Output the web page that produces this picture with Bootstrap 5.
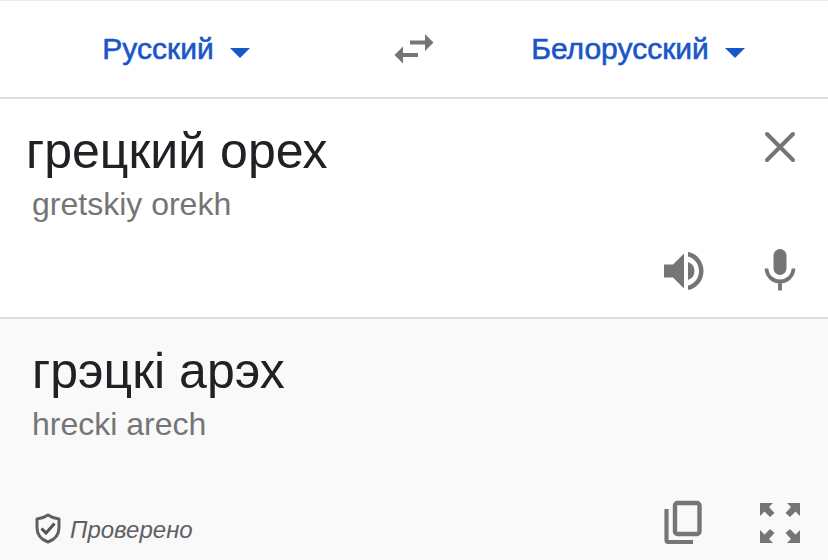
<!DOCTYPE html>
<html lang="ru">
<head>
<meta charset="utf-8">
<meta name="viewport" content="width=device-width, initial-scale=1">
<title>Переводчик</title>
<link rel="stylesheet" href="https://cdn.jsdelivr.net/npm/bootstrap@5.3.0/dist/css/bootstrap.min.css">
<style>
  body { font-family: "Liberation Sans", Arial, sans-serif; color: #202124; background: #fff; }
  .lang-bar { border-top: 1px solid #ececec; border-bottom: 2px solid #dedede; padding: 24px 0; }
  .lang-side { flex: 1 1 0; padding-right: 14px; }
  .lang-btn { color: #1a56c8; font-size: 30px; line-height: 48px; -webkit-text-stroke: .02em currentColor; }
  .lang-btn:hover { color: #1a56c8; }
  .swap-col { width: 96px; }
  .plain-btn { color: #757575; line-height: 1; }
  .plain-btn svg, .lang-btn svg { display: block; fill: currentColor; }
  .source-pane { border-bottom: 2px solid #dedede; padding: 20px 24px 22px 26px; }
  .result-pane { background: #f9f9f9; padding: 20px 24px 13px 32px; }
  .phrase { font-size: 50px; line-height: 64px; color: #202124; }
  .source-input { resize: none; overflow: hidden; height: 64px; outline: 0; }
  .translit { font-size: 32px; line-height: 42px; color: #757575; }
  .source-pane .translit { padding-left: 6px; }
  .source-pane .action-row { margin-top: 22px; }
  .action-row { gap: 48px; }
  .verified { font-size: 24px; line-height: 32px; color: #5f6063; gap: 6px; padding-top: 14px; }
</style>
<script defer src="https://cdn.jsdelivr.net/npm/bootstrap@5.3.0/dist/js/bootstrap.bundle.min.js"></script>
</head>
<body>
<div class="d-flex flex-column min-vh-100">
  <header class="lang-bar d-flex align-items-center">
    <div class="lang-side d-flex justify-content-center">
      <button type="button" class="lang-btn btn border-0 p-0 d-flex align-items-center gap-3">Русский
        <svg class="mt-2" width="20" height="10" viewBox="0 0 20 10" aria-hidden="true"><path d="M0 0h20L10 10z"/></svg>
      </button>
    </div>
    <div class="swap-col d-flex justify-content-center">
      <button type="button" class="plain-btn btn border-0 p-0" aria-label="Поменять языки">
        <svg width="40" height="30" viewBox="0 0 40 30" aria-hidden="true"><path d="M16 6.500h15V0l8.500 8.500L31 17v-6.500H16zM24 23H9v6.500L.5 21 9 12.500V19h15z"/></svg>
      </button>
    </div>
    <div class="lang-side d-flex justify-content-center">
      <button type="button" class="lang-btn btn border-0 p-0 d-flex align-items-center gap-3">Белорусский
        <svg class="mt-2" width="20" height="10" viewBox="0 0 20 10" aria-hidden="true"><path d="M0 0h20L10 10z"/></svg>
      </button>
    </div>
  </header>

  <main class="d-flex flex-column flex-grow-1">
    <section class="source-pane">
      <div class="d-flex align-items-start">
        <div class="flex-grow-1">
          <textarea class="source-input phrase d-block w-100 border-0 p-0 bg-transparent" rows="1" aria-label="Исходный текст" spellcheck="false">грецкий орех</textarea>
          <div class="translit">gretskiy orekh</div>
        </div>
        <button type="button" class="plain-btn btn border-0 p-0 mt-1" aria-label="Очистить">
          <svg width="48" height="48" viewBox="0 0 48 48" aria-hidden="true"><path d="M11 11l26 26M37 11L11 37" fill="none" stroke="currentColor" stroke-width="4" stroke-linecap="round"/></svg>
        </button>
      </div>
      <div class="action-row d-flex justify-content-end">
        <button type="button" class="plain-btn btn border-0 p-0" aria-label="Прослушать">
          <svg width="48" height="48" viewBox="0 0 48 48" aria-hidden="true"><path d="M4 17.500h9L24 6.500v35l-11-11H4zM28 15a9.500 9.500 0 0 1 0 18zM28 5C37 6.500 43.500 14.500 43.500 24S37 41.500 28 43V38.500C34.500 37 39 31 39 24S34.500 11 28 9.500z"/></svg>
        </button>
        <button type="button" class="plain-btn btn border-0 p-0" aria-label="Голосовой ввод">
          <svg width="48" height="48" viewBox="0 0 48 48" aria-hidden="true"><rect x="17.500" y="2" width="13" height="26" rx="6.500"/><path d="M10.500 21.500C11 29.500 17 34.500 24 34.500S37 29.500 37.500 21.500M24 34v9.500" fill="none" stroke="currentColor" stroke-width="3.800"/></svg>
        </button>
      </div>
    </section>

    <section class="result-pane d-flex flex-column flex-grow-1">
      <div class="phrase" lang="be">грэцкі арэх</div>
      <div class="translit">hrecki arech</div>
      <div class="d-flex align-items-center justify-content-between mt-auto">
        <div class="verified d-flex align-items-center fst-italic">
          <svg width="32" height="34" viewBox="0 0 32 34" aria-hidden="true"><path d="M16 2c3.500 2.500 7 3.500 11 4V14.500c0 6.500-4 12-11 14.500C9 26.500 5 21 5 14.500V6c4-.5 7.500-1.500 11-4z" fill="none" stroke="#5f6063" stroke-width="3" stroke-linejoin="round"/><path d="M9.500 15.500l4.500 4.500 8.500-9.500" fill="none" stroke="#505154" stroke-width="3"/></svg>
          <span>Проверено</span>
        </div>
        <div class="action-row d-flex">
          <button type="button" class="plain-btn btn border-0 p-0" aria-label="Копировать">
            <svg width="48" height="48" viewBox="0 0 48 48" aria-hidden="true"><rect x="15" y="4" width="24.500" height="31" rx="2.500" fill="none" stroke="currentColor" stroke-width="4.400"/><path d="M6.500 10v31q0 2 2 2H33" fill="none" stroke="currentColor" stroke-width="4.200"/></svg>
          </button>
          <button type="button" class="plain-btn btn border-0 p-0" aria-label="Во весь экран">
            <svg width="48" height="48" viewBox="0 0 48 48" aria-hidden="true"><g id="corner"><path d="M4 4h13l-4 4 5.500 6-4.500 4-5.500-5.500L4 17z"/></g><use href="#corner" transform="matrix(-1 0 0 1 48 0)"/><use href="#corner" transform="matrix(1 0 0 -1 0 48)"/><use href="#corner" transform="matrix(-1 0 0 -1 48 48)"/></svg>
          </button>
        </div>
      </div>
    </section>
  </main>
</div>
</body>
</html>
